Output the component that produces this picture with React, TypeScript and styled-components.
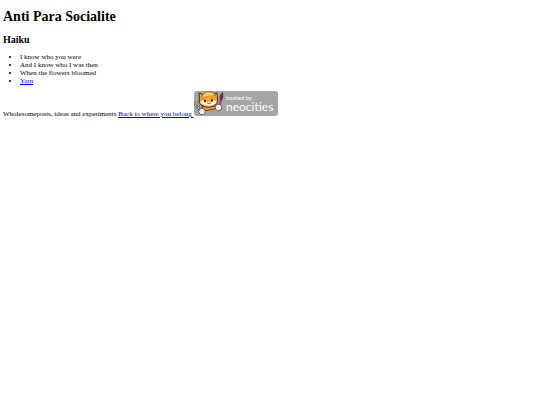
import React from "react";
import styled, { createGlobalStyle } from "styled-components";

const GlobalStyle = createGlobalStyle`
  body {
    margin: 0;
    background: #fff;
    color: #000;
    font-family: "Liberation Serif", "Times New Roman", serif;
    font-size: 7px;
    line-height: 8px;
  }
`;

const Page = styled.main`
  padding: 9px 3px 3px;
`;

const Title = styled.h1`
  margin: 0 0 9px;
  font-size: 14px;
  line-height: 16px;
`;

const Subtitle = styled.h2`
  margin: 0 0 8px;
  font-size: 10px;
  line-height: 11px;
`;

const Verses = styled.ul`
  margin: 0 0 6px;
  padding: 0 0 0 17px;
`;

const Link = styled.a`
  color: #0000ee;
  text-decoration: underline;
`;

const Footer = styled.p`
  margin: 0;
`;

const Badge = styled.svg`
  width: 84px;
  height: 25px;
  vertical-align: baseline;
`;

const BadgeText = styled.text<{ $size: number }>`
  fill: #fff;
  font-family: "Lato", "Open Sans", sans-serif;
  font-size: ${({ $size }) => $size}px;
`;

function NeocitiesBadge() {
  return (
    <Badge viewBox="0 0 84 25" role="img" aria-label="Hosted by Neocities">
      <rect x="0" y="0" width="84" height="25" rx="3" fill="#a5a5a5" />
      {/* fork */}
      <g fill="none" stroke="#444" strokeLinecap="round">
        <path d="M3 15 L8 22" strokeWidth="2.4" />
        <path d="M3 15 L8 22" stroke="#ddd" strokeWidth="1.2" />
        <path d="M1 11 V14 L3 16 L5 14 L4 11" stroke="#555" strokeWidth="1.4" />
        <path d="M1 11 V14 L3 16 L5 14 L4 11" stroke="#e8e8e8" strokeWidth="0.6" />
      </g>
      {/* brush */}
      <path d="M25.5 17 L27 8" stroke="#4b3035" strokeWidth="1.8" strokeLinecap="round" />
      <path d="M25.5 17 L27 8" stroke="#b09894" strokeWidth="0.6" />
      <path d="M26 8 Q25.5 4.5 28.5 1.5 Q29.5 5 28 8.5 Z" fill="#a3242d" stroke="#4b2028" strokeWidth="0.7" />
      {/* body and head */}
      <path d="M8 15 L19 14 L24 17 L20 18 L10 20 Z" fill="#ed9b35" stroke="#4b2b16" strokeWidth="0.8" />
      <path d="M5.5 9 L5 2 L10 4 Q14 1 19 3 L23 2 L23.5 8 Q25 12 20 15 Q13 18 7 14 Q4 12 5.5 9 Z" fill="#f5a63b" stroke="#4b2b16" strokeWidth="1" />
      <path d="M7 10 Q10 9 13 11 L16 11 Q20 8 22 10 Q23 12 19 14 Q12 16 7 12 Z" fill="#fff6e6" />
      {/* hard hat */}
      <path d="M8 6 Q9 0.5 15 0.7 Q21 1 21 5 Q14 4 7 8 Z" fill="#ffcf4c" stroke="#79501c" strokeWidth="0.7" />
      <path d="M6 8 Q13 4 23 6" fill="none" stroke="#e4a22c" strokeWidth="1.2" />
      <ellipse cx="11" cy="10" rx="1" ry="1.4" fill="#2c2420" />
      <ellipse cx="18" cy="9.5" rx="1" ry="1.4" fill="#2c2420" />
      <path d="M13 12 Q15 14 17 11.5" fill="none" stroke="#783822" strokeWidth="0.8" />
      {/* paws */}
      <circle cx="8" cy="20.5" r="3.2" fill="#fff" stroke="#4a4039" strokeWidth="0.8" />
      <circle cx="24.5" cy="16.5" r="3.2" fill="#fff" stroke="#4a4039" strokeWidth="0.8" />
      <path d="M7 19 V21 M9.5 19.5 V21 M24 15 V17" stroke="#aaa19a" strokeWidth="0.5" />
      <BadgeText x="32" y="9" $size={6}>hosted by</BadgeText>
      <BadgeText x="32" y="20" $size={12}>neocities</BadgeText>
    </Badge>
  );
}

export default function App() {
  return (
    <>
      <GlobalStyle />
      <Page>
        <Title>Anti Para Socialite</Title>
        <Subtitle>Haiku</Subtitle>
        <Verses>
          <li>I know who you were</li>
          <li>And I know who I was then</li>
          <li>When the flowers bloomed</li>
          <li>
            <Link href="#yarn">Yarn</Link>
          </li>
        </Verses>
        <Footer>
          Wholesomeposts, ideas and experiments{" "}
          <Link href="#back">
            Back to where you belong <NeocitiesBadge />
          </Link>
        </Footer>
      </Page>
    </>
  );
}
